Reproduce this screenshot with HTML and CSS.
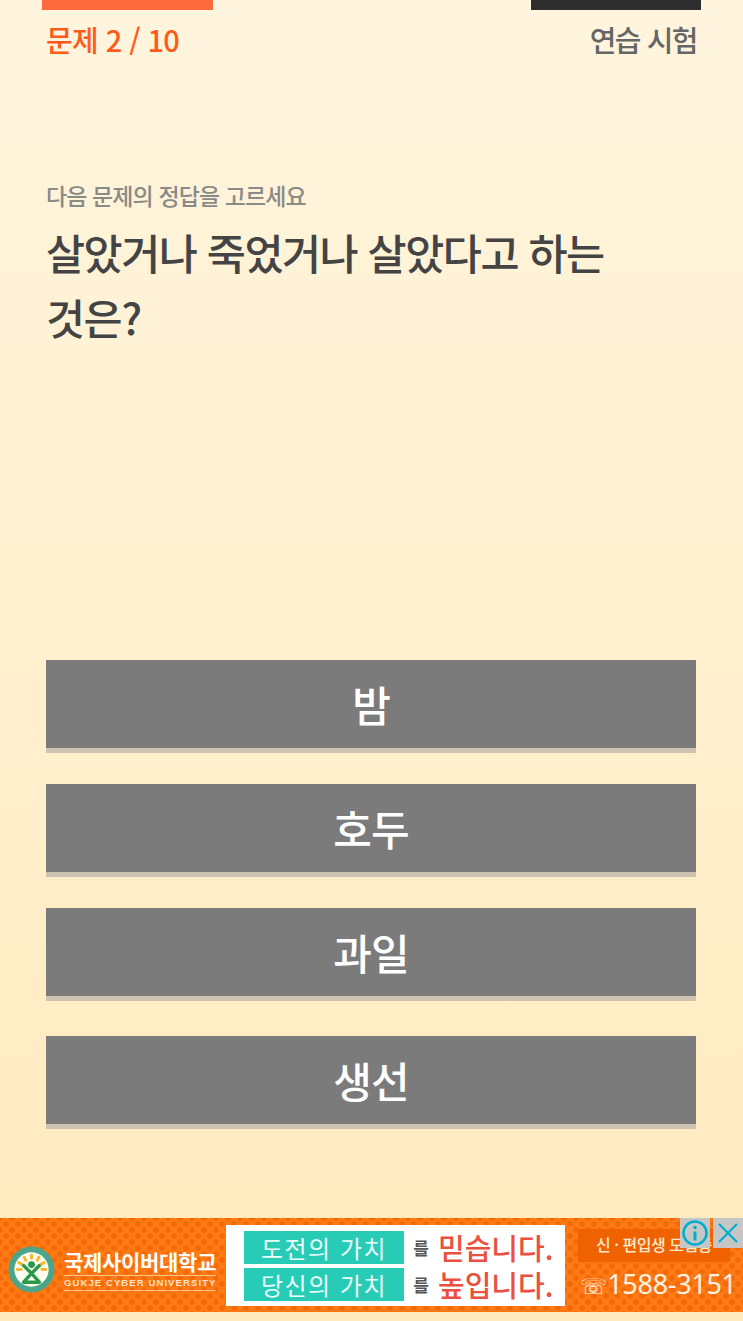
FILE: index.html
```html
<!DOCTYPE html>
<html lang="ko">
<head>
<meta charset="utf-8">
<title>연습 시험</title>
<link rel="stylesheet" href="styles.css">
</head>
<body>
<div class="page">
  <div class="bars"><span class="bar bar-orange"></span><span class="bar bar-dark"></span></div>
  <div class="status"><span class="count">문제 2 / 10</span><span class="mode">연습 시험</span></div>
  <p class="hint">다음 문제의 정답을 고르세요</p>
  <h1 class="question">살았거나 죽었거나 살았다고 하는<br>것은?</h1>
  <div class="answers">
    <button class="answer">밤</button>
    <button class="answer">호두</button>
    <button class="answer">과일</button>
    <button class="answer answer-last">생선</button>
  </div>
  <div class="ad">
    <div class="brand">
      <svg class="logo" viewBox="0 0 48 48" aria-hidden="true">
        <circle cx="24" cy="24" r="23.5" fill="#4aa58a"/>
        <circle cx="24" cy="24" r="17.5" fill="#fffdf0"/>
        <g stroke="#f5b82e" stroke-width="3" stroke-linecap="round">
          <path d="M24 9.5v3M16.5 11.5l1.5 3M31.5 11.5l-1.5 3M11 17l3 1.5M37 17l-3 1.5M9.5 24h4M38.500 24h-4"/>
        </g>
        <circle cx="24" cy="19" r="3.500" fill="#2a9a4a"/>
        <path d="M15 19l9 9 9-9M24 28l-8 9h16z" fill="none" stroke="#2a9a4a" stroke-width="3.500" stroke-linejoin="round"/>
      </svg>
      <div class="brand-text">
        <div class="brand-ko">국제사이버대학교</div>
        <div class="brand-en">GUKJE CYBER UNIVERSITY</div>
      </div>
    </div>
    <div class="slogan">
      <div class="slogan-row"><span class="tag">도전의 가치</span><span class="particle">를</span><span class="claim">믿습니다.</span></div>
      <div class="slogan-row"><span class="tag">당신의 가치</span><span class="particle">를</span><span class="claim">높입니다.</span></div>
    </div>
    <div class="contact">
      <div class="recruit">신 · 편입생 모집중</div>
      <div class="phone"><span class="phone-icon">☏</span>1588-3151</div>
    </div>
    <div class="ad-controls">
      <span class="ad-btn">
        <svg viewBox="0 0 28 28" class="ad-icon" aria-hidden="true"><circle cx="14" cy="14" r="11.500" fill="none" stroke="#00aecd" stroke-width="2.500"/><circle cx="14" cy="8.500" r="1.800" fill="#00aecd"/><path d="M14 12.500v9" stroke="#00aecd" stroke-width="3"/></svg>
      </span>
      <span class="ad-btn">
        <svg viewBox="0 0 28 28" class="ad-icon" aria-hidden="true"><path d="M5 5l18 18M23 5L5 23" stroke="#00aecd" stroke-width="2.200"/></svg>
      </span>
    </div>
  </div>
</div>
</body>
</html>
```
FILE: styles.css
```css
* { box-sizing: border-box; }
html, body { margin: 0; padding: 0; }
body { font-family: "Noto Sans CJK KR", "Noto Sans", sans-serif; }
.page {
  position: relative;
  width: 743px;
  height: 1321px;
  overflow: hidden;
  background: linear-gradient(180deg, #fff5de 0%, #ffeabd 100%);
}
.bars { display: flex; justify-content: space-between; padding: 0 42px; }
.bar { display: block; width: 170.500px; height: 9.500px; }
.bar-orange { background: #ff6a3c; }
.bar-dark { background: #2d2d2d; }
.status {
  display: flex;
  justify-content: space-between;
  padding: 7px 46px 0;
  font-size: 29px;
  line-height: 44px;
  font-weight: 500;
}
.count { color: #ff5a1a; letter-spacing: -0.600px; }
.mode { color: #666; letter-spacing: -1.500px; }
.hint {
  margin: 117px 0 0 46px;
  font-size: 23px;
  line-height: 34px;
  font-weight: 500;
  letter-spacing: -0.900px;
  color: #8a8a86;
}
.question {
  margin: 7px 0 0 46px;
  font-size: 42.500px;
  line-height: 65px;
  font-weight: 500;
  letter-spacing: -1.500px;
  color: #444;
}
.answers { margin: 311px 47px 0 46px; display: flex; flex-direction: column; gap: 31px; }
.answer {
  display: block;
  width: 100%;
  height: 93px;
  padding: 0;
  border: 0;
  border-bottom: 5px solid #cdc2b0;
  background: #7b7b7b;
  color: #fff;
  font-family: inherit;
  font-size: 42px;
  font-weight: 500;
  line-height: 60px;
  letter-spacing: -1px;
}
.answer-last { margin-top: 4px; }
.ad {
  position: absolute;
  left: 0;
  top: 1218px;
  width: 743px;
  height: 94px;
  display: flex;
  align-items: stretch;
  background-color: #ff7a14;
  background-image:
    radial-gradient(circle, #f56a08 2.500px, transparent 3.200px),
    radial-gradient(circle, #f56a08 2.500px, transparent 3.200px);
  background-size: 12px 12px;
  background-position: 0 0, 6px 6px;
}
.brand { width: 226px; display: flex; align-items: center; padding: 9px 0 0 8px; gap: 9px; flex: none; }
.logo { width: 47px; height: 47px; flex: none; }
.brand-text { display: flex; flex-direction: column; }
.brand-ko { font-size: 21px; line-height: 27px; font-weight: 700; letter-spacing: -0.300px; color: #fff; white-space: nowrap; }
.brand-en {
  border-top: 1px solid #ffc38e;
  border-bottom: 1px solid #ffc38e;
  font-family: "Liberation Sans", sans-serif;
  font-size: 9.500px;
  line-height: 14px;
  font-weight: 700;
  letter-spacing: 1.100px;
  color: #ffe3c8;
  white-space: nowrap;
}
.slogan {
  width: 339px;
  flex: none;
  margin: 7px 0 6px;
  padding: 6px 0 5px 18px;
  background: #fff;
  display: flex;
  flex-direction: column;
  gap: 4px;
}
.slogan-row { display: flex; align-items: center; height: 33px; }
.tag {
  width: 160px;
  height: 33px;
  background: #28ccb6;
  color: #eafff9;
  font-size: 24px;
  line-height: 33px;
  text-align: center;
  letter-spacing: 1.500px;
}
.particle { width: 34px; text-align: center; font-size: 17px; font-weight: 700; color: #555; }
.claim { font-size: 29px; line-height: 33px; font-weight: 500; color: #ea4f3f; letter-spacing: 0; white-space: nowrap; }
.contact { flex: 1; min-width: 0; display: flex; flex-direction: column; padding: 11px 0 0 13px; }
.recruit {
  width: 152px;
  height: 33px;
  background: #f06200;
  color: #ffe9d2;
  font-size: 16px;
  font-weight: 500;
  line-height: 30px;
  letter-spacing: -0.500px;
  text-align: center;
  white-space: nowrap;
}
.phone {
  margin: 3px 0 0 2px;
  font-family: "Noto Sans", "DejaVu Sans", sans-serif;
  font-size: 27px;
  line-height: 38px;
  letter-spacing: -0.300px;
  color: #fff3e4;
  white-space: nowrap;
}
.phone-icon { font-size: 22px; font-weight: 700; }
.ad-controls { position: absolute; right: 0; top: 0; display: flex; gap: 3px; }
.ad-btn { display: flex; align-items: center; justify-content: center; width: 30px; height: 30px; background: #c6c6c6; }
.ad-icon { width: 28px; height: 28px; display: block; }
```
